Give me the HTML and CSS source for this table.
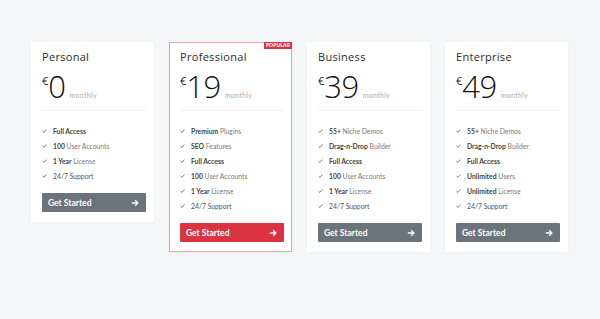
FILE: index.html
```html
<!DOCTYPE html>
<html>
<head>
<meta charset="utf-8">
<link rel="stylesheet" href="styles.css">
</head>
<body>
<div class="plans">
  <div class="card">
    <h3 class="title">Personal</h3>
    <div class="price"><span class="cur">€</span><span class="amt">0</span><span class="per">monthly</span></div>
    <ul class="features">
      <li><svg class="chk" viewBox="0 0 10 8"><path d="M1 4.2 L3.8 6.8 L9 1.2"/></svg><span><b>Full Access</b></span></li>
      <li><svg class="chk" viewBox="0 0 10 8"><path d="M1 4.2 L3.8 6.8 L9 1.2"/></svg><span><b>100</b> User Accounts</span></li>
      <li><svg class="chk" viewBox="0 0 10 8"><path d="M1 4.2 L3.8 6.8 L9 1.2"/></svg><span><b>1 Year</b> License</span></li>
      <li><svg class="chk" viewBox="0 0 10 8"><path d="M1 4.2 L3.8 6.8 L9 1.2"/></svg><span class="mid">24/7 Support</span></li>
    </ul>
    <a class="btn">Get Started<svg class="arr" viewBox="0 0 10 10"><path d="M1 5 H8.5 M5.2 1.6 L8.6 5 L5.2 8.4"/></svg></a>
  </div>
  <div class="card featured">
    <span class="badge">POPULAR</span>
    <h3 class="title">Professional</h3>
    <div class="price"><span class="cur">€</span><span class="amt">19</span><span class="per">monthly</span></div>
    <ul class="features">
      <li><svg class="chk" viewBox="0 0 10 8"><path d="M1 4.2 L3.8 6.8 L9 1.2"/></svg><span><b>Premium</b> Plugins</span></li>
      <li><svg class="chk" viewBox="0 0 10 8"><path d="M1 4.2 L3.8 6.8 L9 1.2"/></svg><span><b>SEO</b> Features</span></li>
      <li><svg class="chk" viewBox="0 0 10 8"><path d="M1 4.2 L3.8 6.8 L9 1.2"/></svg><span><b>Full Access</b></span></li>
      <li><svg class="chk" viewBox="0 0 10 8"><path d="M1 4.2 L3.8 6.8 L9 1.2"/></svg><span><b>100</b> User Accounts</span></li>
      <li><svg class="chk" viewBox="0 0 10 8"><path d="M1 4.2 L3.8 6.8 L9 1.2"/></svg><span><b>1 Year</b> License</span></li>
      <li><svg class="chk" viewBox="0 0 10 8"><path d="M1 4.2 L3.8 6.8 L9 1.2"/></svg><span class="mid">24/7 Support</span></li>
    </ul>
    <a class="btn btn-red">Get Started<svg class="arr" viewBox="0 0 10 10"><path d="M1 5 H8.5 M5.2 1.6 L8.6 5 L5.2 8.4"/></svg></a>
  </div>
  <div class="card">
    <h3 class="title">Business</h3>
    <div class="price"><span class="cur">€</span><span class="amt">39</span><span class="per">monthly</span></div>
    <ul class="features">
      <li><svg class="chk" viewBox="0 0 10 8"><path d="M1 4.2 L3.8 6.8 L9 1.2"/></svg><span><b>55+</b> Niche Demos</span></li>
      <li><svg class="chk" viewBox="0 0 10 8"><path d="M1 4.2 L3.8 6.8 L9 1.2"/></svg><span><b>Drag-n-Drop</b> Builder</span></li>
      <li><svg class="chk" viewBox="0 0 10 8"><path d="M1 4.2 L3.8 6.8 L9 1.2"/></svg><span><b>Full Access</b></span></li>
      <li><svg class="chk" viewBox="0 0 10 8"><path d="M1 4.2 L3.8 6.8 L9 1.2"/></svg><span><b>100</b> User Accounts</span></li>
      <li><svg class="chk" viewBox="0 0 10 8"><path d="M1 4.2 L3.8 6.8 L9 1.2"/></svg><span><b>1 Year</b> License</span></li>
      <li><svg class="chk" viewBox="0 0 10 8"><path d="M1 4.2 L3.8 6.8 L9 1.2"/></svg><span class="mid">24/7 Support</span></li>
    </ul>
    <a class="btn">Get Started<svg class="arr" viewBox="0 0 10 10"><path d="M1 5 H8.5 M5.2 1.6 L8.6 5 L5.2 8.4"/></svg></a>
  </div>
  <div class="card">
    <h3 class="title">Enterprise</h3>
    <div class="price"><span class="cur">€</span><span class="amt">49</span><span class="per">monthly</span></div>
    <ul class="features">
      <li><svg class="chk" viewBox="0 0 10 8"><path d="M1 4.2 L3.8 6.8 L9 1.2"/></svg><span><b>55+</b> Niche Demos</span></li>
      <li><svg class="chk" viewBox="0 0 10 8"><path d="M1 4.2 L3.8 6.8 L9 1.2"/></svg><span><b>Drag-n-Drop</b> Builder</span></li>
      <li><svg class="chk" viewBox="0 0 10 8"><path d="M1 4.2 L3.8 6.8 L9 1.2"/></svg><span><b>Full Access</b></span></li>
      <li><svg class="chk" viewBox="0 0 10 8"><path d="M1 4.2 L3.8 6.8 L9 1.2"/></svg><span><b>Unlimited</b> Users</span></li>
      <li><svg class="chk" viewBox="0 0 10 8"><path d="M1 4.2 L3.8 6.8 L9 1.2"/></svg><span><b>Unlimited</b> License</span></li>
      <li><svg class="chk" viewBox="0 0 10 8"><path d="M1 4.2 L3.8 6.8 L9 1.2"/></svg><span class="mid">24/7 Support</span></li>
    </ul>
    <a class="btn">Get Started<svg class="arr" viewBox="0 0 10 10"><path d="M1 5 H8.5 M5.2 1.6 L8.6 5 L5.2 8.4"/></svg></a>
  </div>
</div>
</body>
</html>
```
FILE: styles.css
```css
* { box-sizing: border-box; }
html, body { margin: 0; padding: 0; }
body {
  background: #f5f6f8;
  font-family: Lato, "Liberation Sans", sans-serif;
  width: 600px;
  height: 319px;
  overflow: hidden;
}
.plans {
  display: flex;
  align-items: flex-start;
  gap: 15px;
  padding: 42px 32px 0 31px;
}
.card {
  position: relative;
  width: 123px;
  background: #fff;
  padding: 6px 7px 9px 10px;
  border: 1px solid transparent;
  box-shadow: 0 1px 3px rgba(40, 50, 70, 0.03);
}
.featured {
  border-color: #e7a4ab;
}
.badge {
  position: absolute;
  top: -1px;
  right: -1px;
  background: #d9323f;
  color: #fff;
  font-family: Lato, sans-serif;
  font-weight: 900;
  font-size: 5px;
  line-height: 7px;
  padding: 0 2px;
  letter-spacing: 0.1px;
}
.title {
  margin: 0;
  font-family: "Open Sans", sans-serif;
  font-weight: 500;
  font-size: 11px;
  line-height: 16px;
  letter-spacing: 0.3px;
  color: #2b2b2b;
}
.price {
  display: flex;
  align-items: baseline;
  margin-top: 7px;
  padding-bottom: 10px;
  border-bottom: 1px solid #f0f1f3;
}
.cur {
  align-self: flex-start;
  font-family: "Open Sans", sans-serif;
  font-size: 11px;
  line-height: 14px;
  margin-top: 2px;
  color: #222;
}
.amt {
  font-family: "Open Sans", sans-serif;
  font-weight: 300;
  font-size: 31px;
  line-height: 28px;
  color: #111;
  letter-spacing: -0.5px;
}
.per {
  font-size: 7px;
  line-height: 10px;
  color: #aaa;
  margin-left: 4px;
  letter-spacing: 0.3px;
}
.features {
  list-style: none;
  margin: 12px 0 0;
  padding: 0;
}
.features li {
  display: flex;
  align-items: center;
  gap: 6px;
  height: 15px;
  font-size: 6.8px;
  color: #7a7a7a;
}
.features b {
  font-weight: 700;
  color: #444;
}
.features .mid { color: #555; }
.chk {
  width: 5px;
  height: 4px;
  fill: none;
  stroke: #555;
  stroke-width: 1.6;
  flex: none;
}
.btn {
  display: flex;
  align-items: center;
  justify-content: space-between;
  margin-top: 10px;
  height: 19px;
  padding: 0 7px 0 6px;
  background: #6b737b;
  color: #fff;
  font-weight: 700;
  font-size: 8.5px;
  border-radius: 1px;
}
.btn-red { background: #dc3343; }
.arr {
  width: 8px;
  height: 8px;
  fill: none;
  stroke: #fff;
  stroke-width: 1.6;
}
```
